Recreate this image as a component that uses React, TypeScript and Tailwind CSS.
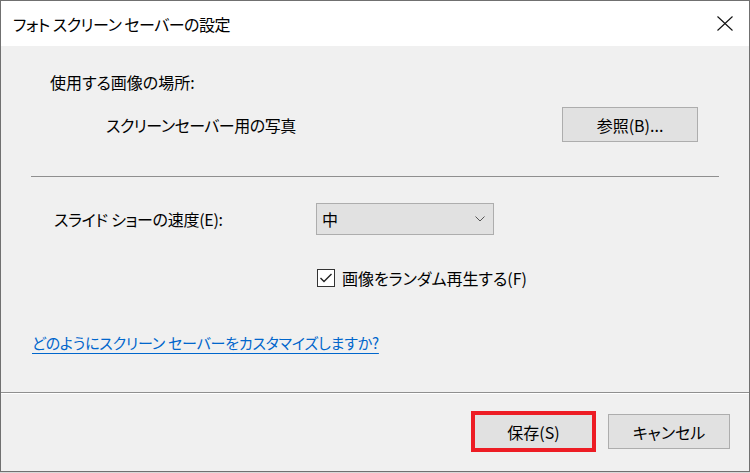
import React from "react";

const font = "[font-family:'Noto_Sans_CJK_JP','Noto_Sans',sans-serif] [font-feature-settings:'palt']";

function WinButton({ label, className }: { label: string; className?: string }) {
  return (
    <div
      className={`flex items-center justify-center bg-[#e1e1e1] border border-[#adadad] text-[16px] text-black ${className ?? ""}`}
    >
      {label}
    </div>
  );
}

export default function App() {
  return (
    <div className={`w-[750px] h-[473px] bg-[#d8d8d8] ${font}`}>
      <div className="w-[750px] h-[472px] border border-[#707070] flex flex-col">
        {/* title bar */}
        <div className="h-[45px] bg-white flex items-center justify-between pl-[12px] pr-[16px]">
          <span className="text-[16px] tracking-[-0.5px] text-black">フォト スクリーン セーバーの設定</span>
          <svg width="16" height="15" viewBox="0 0 16 15">
            <path d="M0.5 0.5 L15.5 14.5 M15.5 0.5 L0.5 14.5" stroke="#111" strokeWidth="1.1" />
          </svg>
        </div>

        {/* body */}
        <div className="h-[346px] bg-[#f0f0f0] flex flex-col text-[16px] text-black">
          <div className="mt-[26px] ml-[49px] leading-[20px]">使用する画像の場所:</div>

          <div className="mt-[15px] flex items-center h-[35px]">
            <span className="ml-[105px] tracking-[-0.5px]">スクリーンセーバー用の写真</span>
            <WinButton label="参照(B)..." className="ml-auto mr-[51px] w-[136px] h-[35px]" />
          </div>

          <div className="mt-[34px] ml-[30px] w-[688px] h-px bg-[#8f8f8f]" />

          <div className="mt-[26px] flex items-center h-[32px]">
            <span className="ml-[53px] w-[262px] tracking-[-0.3px]">スライド ショーの速度(E):</span>
            <div className="w-[178px] h-[32px] bg-[#e1e1e1] border border-[#adadad] flex items-center justify-between pl-[5px] pr-[8px]">
              <span>中</span>
              <svg width="10" height="6" viewBox="0 0 10 6">
                <path d="M0.5 0.5 L5 5 L9.5 0.5" fill="none" stroke="#555" strokeWidth="1" />
              </svg>
            </div>
          </div>

          <div className="mt-[34px] ml-[316px] flex items-center h-[18px]">
            <div className="w-[18px] h-[18px] border border-[#333] bg-white flex items-center justify-center">
              <svg width="14" height="12" viewBox="0 0 14 12">
                <path d="M1.5 6 L5 9.5 L12.5 2" fill="none" stroke="#222" strokeWidth="1.4" />
              </svg>
            </div>
            <span className="ml-[7px] leading-[20px]">画像をランダム再生する(F)</span>
          </div>

          <div className="mt-[45px] ml-[31px] leading-[20px]">
            <span className="text-[15px] tracking-[-0.2px] text-[#0066cc] underline underline-offset-[4px] decoration-[#0066cc]">
              どのようにスクリーン セーバーをカスタマイズしますか?
            </span>
          </div>
        </div>

        {/* footer */}
        <div className="border-t border-[#8f8f8f]" />
        <div className="flex-1 bg-[#f0f0f0] border-t border-white flex items-start justify-end pr-[19px]">
          <div className="mt-[17px] flex items-center gap-[12px]">
            <div className="w-[125px] h-[41px] border-4 border-[#ed1c24] bg-[#e1e1e1] flex items-center justify-center text-[16px] text-black">
              保存(S)
            </div>
            <WinButton label="キャンセル" className="w-[122px] h-[35px]" />
          </div>
        </div>
      </div>
    </div>
  );
}
